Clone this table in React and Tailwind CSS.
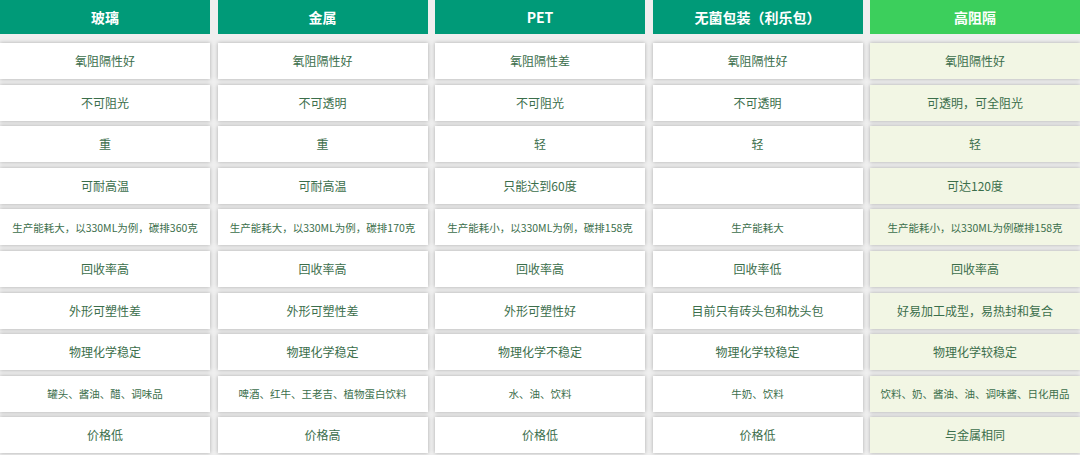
import React from "react";

const headers = ["玻璃", "金属", "PET", "无菌包装（利乐包）", "高阻隔"];

const rows = [
  { small: false, cells: ["氧阻隔性好", "氧阻隔性好", "氧阻隔性差", "氧阻隔性好", "氧阻隔性好"] },
  { small: false, cells: ["不可阻光", "不可透明", "不可阻光", "不可透明", "可透明，可全阻光"] },
  { small: false, cells: ["重", "重", "轻", "轻", "轻"] },
  { small: false, cells: ["可耐高温", "可耐高温", "只能达到60度", "", "可达120度"] },
  {
    small: true,
    cells: [
      "生产能耗大，以330ML为例，碳排360克",
      "生产能耗大，以330ML为例，碳排170克",
      "生产能耗小，以330ML为例，碳排158克",
      "生产能耗大",
      "生产能耗小，以330ML为例碳排158克",
    ],
  },
  { small: false, cells: ["回收率高", "回收率高", "回收率高", "回收率低", "回收率高"] },
  { small: false, cells: ["外形可塑性差", "外形可塑性差", "外形可塑性好", "目前只有砖头包和枕头包", "好易加工成型，易热封和复合"] },
  { small: false, cells: ["物理化学稳定", "物理化学稳定", "物理化学不稳定", "物理化学较稳定", "物理化学较稳定"] },
  {
    small: true,
    cells: ["罐头、酱油、醋、调味品", "啤酒、红牛、王老吉、植物蛋白饮料", "水、油、饮料", "牛奶、饮料", "饮料、奶、酱油、油、调味酱、日化用品"],
  },
  { small: false, cells: ["价格低", "价格高", "价格低", "价格低", "与金属相同"] },
];

export default function App() {
  return (
    <div
      className="w-[1080px] h-[455px] bg-[#efefef] overflow-hidden flex flex-col"
      style={{ fontFamily: '"Noto Sans CJK SC", "Noto Sans", sans-serif' }}
    >
      <div className="grid grid-cols-5 gap-x-[7.5px] h-[34px] shrink-0">
        {headers.map((h, i) => (
          <div
            key={i}
            className={`flex items-center justify-center text-white font-bold text-[14px] ${
              i === 4 ? "bg-[#3ccf5c]" : "bg-[#009a78]"
            }`}
          >
            {h}
          </div>
        ))}
      </div>
      <div className="mt-[9px] flex flex-col gap-y-[5.6px]">
        {rows.map((r, ri) => (
          <div key={ri} className="grid grid-cols-5 gap-x-[7.5px] h-[36px]">
            {r.cells.map((c, ci) => (
              <div
                key={ci}
                className={`flex items-center justify-center text-[#3b6e4b] shadow-[0_0_4px_rgba(0,0,0,0.28)] ${
                  r.small ? "text-[10.5px]" : "text-[12px]"
                } ${ci === 4 ? "bg-[#f2f6e4]" : "bg-white"}`}
              >
                {c}
              </div>
            ))}
          </div>
        ))}
      </div>
    </div>
  );
}
